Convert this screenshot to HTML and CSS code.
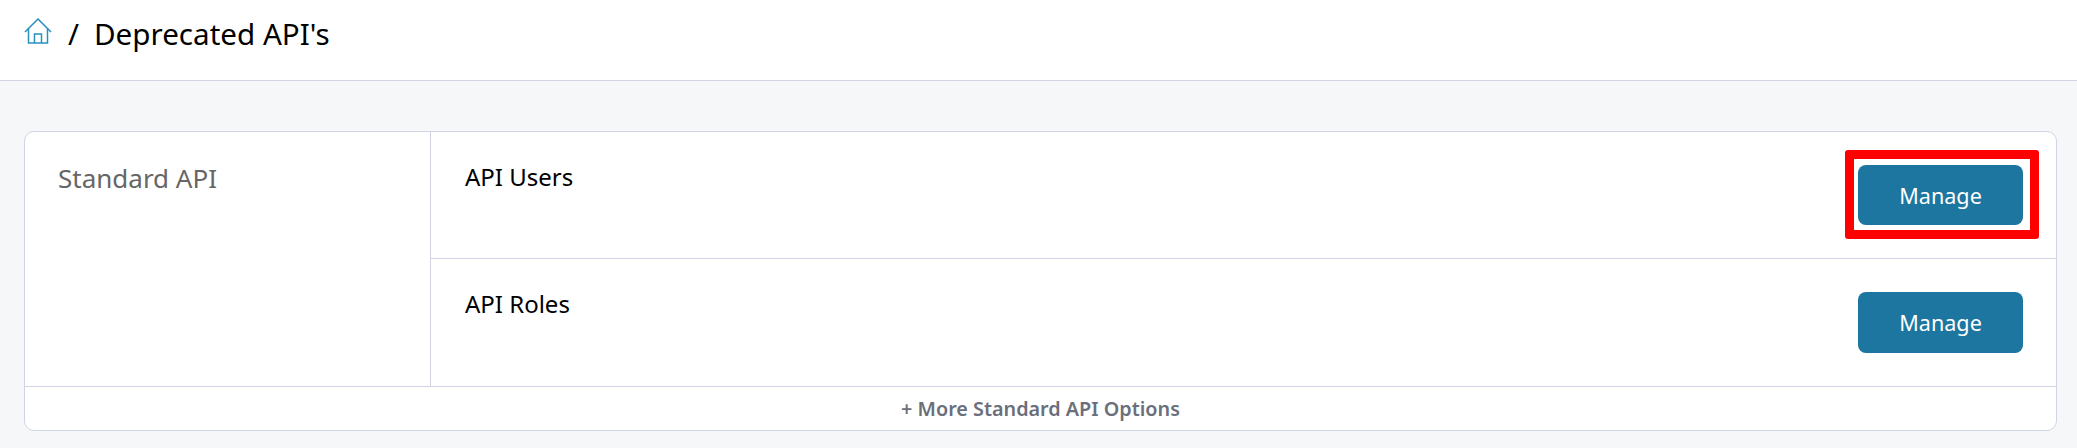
FILE: index.html
```html
<!DOCTYPE html>
<html lang="en">

<head>
    <meta charset="UTF-8">
    <meta name="viewport" content="width=device-width, initial-scale=1.0">
    <title>Deprecated API's</title>
    <link rel="stylesheet" href="styles.css">
</head>

<body>
    <div class="top_bar">
        <svg class="home_icon" viewBox="0 0 28 27" fill="none" stroke="#2b8fc0" stroke-width="1.5">
            <path d="M1 14 L14 1 L27 14" />
            <path d="M4.5 10.5 V25 H23.5 V10.5" />
            <path d="M10.5 25 V16 H17.5 V25" />
        </svg>
        <span class="crumb_sep">/</span>
        <h1>Deprecated API's</h1>
    </div>

    <div class="page_body">
        <div class="api_card">
            <div class="api_main">
                <div class="api_group">Standard API</div>
                <div class="api_rows">
                    <div class="api_row">
                        <span>API Users</span>
                        <button class="manage_btn">Manage</button>
                        <!-- red box from the annotated screenshot -->
                        <div class="highlight_box"></div>
                    </div>
                    <div class="api_row">
                        <span>API Roles</span>
                        <button class="manage_btn">Manage</button>
                    </div>
                </div>
            </div>
            <div class="more_options">+ More Standard API Options</div>
        </div>
    </div>
</body>

</html>
```

FILE: styles.css
```css
* {
    margin: 0;
    padding: 0;
    box-sizing: border-box;
}

body {
    background-color: #f6f7f9;
    font-family: "Noto Sans", sans-serif;
    color: #000;
    height: 448px;
    overflow: hidden;
}

.top_bar {
    display: flex;
    align-items: center;
    height: 81px;
    padding: 0 24px 0 24px;
    background-color: #fff;
    border-bottom: 1px solid #d0d4e4;
}

.home_icon {
    width: 28px;
    height: 27px;
    margin-top: -18px;
}

.crumb_sep {
    font-size: 29.6px;
    margin: -14px 15px 0 16px;
}

.top_bar h1 {
    font-size: 29.6px;
    font-weight: 400;
    margin-top: -14px;
}

.page_body {
    padding: 50px 20px 0 24px;
}

.api_card {
    background-color: #fff;
    border: 1px solid #d0d4e4;
    border-radius: 10px;
}

.api_main {
    display: flex;
    border-bottom: 1px solid #d0d4e4;
}

.api_group {
    width: 406px;
    padding: 29px 33px;
    font-size: 26px;
    line-height: 34px;
    color: #666;
    border-right: 1px solid #d0d4e4;
}

.api_rows {
    flex: 1;
}

.api_row {
    position: relative;
    display: flex;
    justify-content: space-between;
    align-items: flex-start;
    height: 127px;
    padding: 33px 33px 0 34px;
    font-size: 24px;
    border-bottom: 1px solid #d0d4e4;
}

.api_row span {
    line-height: 32px;
    margin-top: -4px;
}

.api_row:last-child {
    border-bottom: none;
}

.manage_btn {
    width: 165px;
    height: 60px;
    border: none;
    border-radius: 8px;
    background-color: #1c76a0;
    color: #fff;
    font-family: "Noto Sans", sans-serif;
    font-size: 21.6px;
}

.api_row:last-child .manage_btn {
    height: 61px;
}

.highlight_box {
    position: absolute;
    top: 18px;
    right: 17px;
    width: 194px;
    height: 89px;
    border: 9px solid #f00;
    border-radius: 3px;
}

.more_options {
    height: 43px;
    line-height: 43px;
    text-align: center;
    font-size: 19.8px;
    font-weight: 600;
    color: #6b6f7b;
}
```
